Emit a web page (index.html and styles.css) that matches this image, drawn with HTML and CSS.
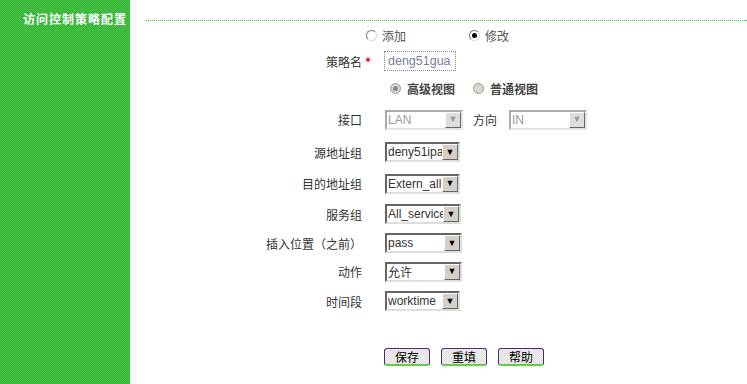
FILE: index.html
```html
<!DOCTYPE html>
<html lang="zh-CN">
  <head>
    <meta charset="UTF-8" />
    <title>访问控制策略配置</title>
    <link rel="stylesheet" href="styles.css">
  </head>
  <body>
    <aside class="side">
      <div class="side-title">访问控制策略配置</div>
    </aside>
    <main class="main">
      <div class="rule"></div>
      <form class="policy-form">
        <div class="row row-mode">
          <span class="radio"></span><span class="radio-text">添加</span>
          <span class="radio checked"></span><span class="radio-text">修改</span>
        </div>

        <div class="label">策略名<span class="req">*</span></div>
        <div class="field"><div class="text-in">deng51gua</div></div>

        <div class="label"></div>
        <div class="field view-field">
          <span class="radio off checked"></span><b class="view-text">高级视图</b>
          <span class="radio off"></span><b class="view-text">普通视图</b>
        </div>

        <div class="label">接口</div>
        <div class="field">
          <div class="sel off w78"><span>LAN</span><i class="arrow">▼</i></div>
          <span class="dir-text">方向</span>
          <div class="sel off w78"><span>IN</span><i class="arrow">▼</i></div>
        </div>

        <div class="label">源地址组</div>
        <div class="field"><div class="sel w75"><span>deny51ipa</span><i class="arrow">▼</i></div></div>

        <div class="label">目的地址组</div>
        <div class="field"><div class="sel w75"><span>Extern_all</span><i class="arrow">▼</i></div></div>

        <div class="label">服务组</div>
        <div class="field"><div class="sel w76"><span>All_service</span><i class="arrow">▼</i></div></div>

        <div class="label">插入位置（之前）</div>
        <div class="field"><div class="sel w77"><span>pass</span><i class="arrow">▼</i></div></div>

        <div class="label">动作</div>
        <div class="field"><div class="sel w77"><span>允许</span><i class="arrow">▼</i></div></div>

        <div class="label">时间段</div>
        <div class="field"><div class="sel w75"><span>worktime</span><i class="arrow">▼</i></div></div>
      </form>
      <div class="btn-row">
        <button class="btn">保存</button>
        <button class="btn">重填</button>
        <button class="btn">帮助</button>
      </div>
    </main>
  </body>
</html>
```

FILE: styles.css
```css
* {
  margin: 0;
  padding: 0;
  box-sizing: border-box;
}
body {
  display: flex;
  height: 100vh;
  background: white;
  font-family: "Noto Sans CJK SC", "Liberation Sans", sans-serif;
  font-size: 12px;
  color: #333;
  overflow: hidden;
}
.side {
  width: 130px;
  flex: none;
  background: #3dbb3d;
  background-image: repeating-conic-gradient(#34b034 0 25%, #48c548 0 50%);
  background-size: 2px 2px;
}
.side-title {
  color: white;
  font-weight: 700;
  text-align: right;
  letter-spacing: 1px;
  padding: 10px 3px 0 0;
  line-height: 18px;
}
.main {
  flex: 1;
}
.rule {
  margin: 20px 0 0 16px;
  border-top: 1px dotted #22cc22;
}
.policy-form {
  display: grid;
  grid-template-columns: 232px 1fr;
  grid-template-rows: 26px 26px 29px 33px 32px 31px 30px 28px 29px 30px;
  column-gap: 23px;
  margin-top: 1px;
}
.label {
  display: flex;
  align-items: center;
  justify-content: flex-end;
  white-space: nowrap;
}
.req {
  color: #e00;
  font-weight: 700;
  margin: 0 -9px 0 3px;
}
.field {
  display: flex;
  align-items: center;
}
.row-mode {
  grid-column: 1 / 3;
  display: flex;
  align-items: center;
  padding-left: 236px;
}
.radio {
  width: 11px;
  height: 11px;
  border-radius: 50%;
  border: 1px solid #777;
  border-bottom-color: #ddd;
  border-right-color: #ddd;
  background: white;
  display: inline-flex;
  align-items: center;
  justify-content: center;
}
.radio.checked::after {
  content: "";
  width: 5px;
  height: 5px;
  border-radius: 50%;
  background: #000;
}
.radio.off {
  background: #d8d8d0;
  border-color: #999;
}
.radio.off.checked::after {
  background: #888;
}
.radio-text {
  margin: 0 63px 0 5px;
  color: #555;
}
.view-field {
  padding-left: 5px;
}
.view-text {
  color: #444;
  margin: 0 18px 0 6px;
}
.text-in {
  width: 72px;
  height: 20px;
  border: 1px dotted #888;
  color: #7d7d9a;
  padding-left: 3px;
  line-height: 18px;
  margin-left: -1px;
  font-size: 12.5px;
  white-space: nowrap;
  font-family: "Liberation Sans", sans-serif;
}
.sel {
  height: 20px;
  border: 2px solid #666;
  border-right-color: #ddd;
  border-bottom-color: #ddd;
  display: flex;
  align-items: center;
  justify-content: space-between;
  background: white;
  padding-left: 1px;
  font-family: "Liberation Sans", "Noto Sans CJK SC", sans-serif;
  color: #333;
  overflow: hidden;
  white-space: nowrap;
}
.sel span {
  overflow: hidden;
}
.sel.off {
  color: #999;
  border-color: #aaa #e4e4e4 #e4e4e4 #aaa;
}
.w75 { width: 75px; }
.w76 { width: 76px; }
.w77 { width: 77px; }
.w78 { width: 78px; }
.arrow {
  flex: none;
  width: 16px;
  height: 16px;
  background: #d4d0c8;
  border: 1px solid;
  border-color: #fff #666 #666 #fff;
  font-style: normal;
  font-size: 9px;
  line-height: 1;
  color: #000;
  display: flex;
  align-items: center;
  justify-content: center;
}
.off .arrow {
  color: #999;
  background: #ddd;
}
.dir-text {
  margin: 0 12px 0 10px;
}
.btn-row {
  display: flex;
  gap: 11px;
  margin: 32px 0 0 254px;
}
.btn {
  width: 46px;
  height: 18px;
  border: 1px solid #4e2a78;
  border-bottom: 2px solid #66cc44;
  border-radius: 3px;
  background: #e8e8e8;
  background-image: repeating-conic-gradient(#dcdcdc 0 25%, #f4f4f4 0 50%);
  background-size: 2px 2px;
  font-family: "Noto Sans CJK SC", sans-serif;
  font-size: 12px;
  color: #000;
  line-height: 14px;
}
```
